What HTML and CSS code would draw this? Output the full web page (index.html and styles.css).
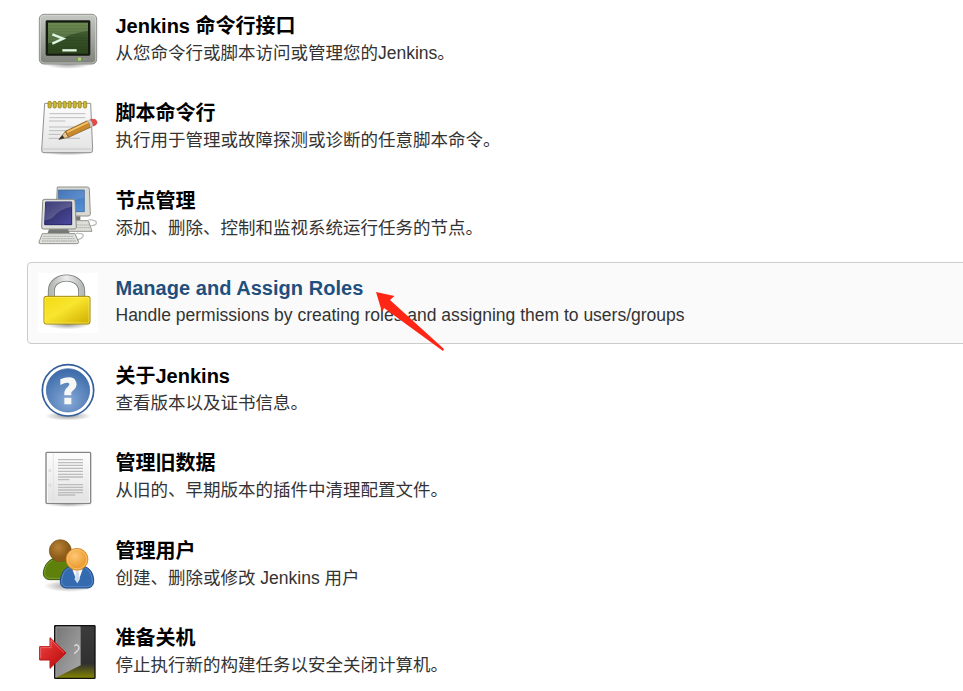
FILE: index.html
```html
<!DOCTYPE html>
<html lang="zh-CN">
<head>
<meta charset="utf-8">
<title>Jenkins</title>
<link rel="stylesheet" href="styles.css">
</head>
<body>
<svg class="defs" width="0" height="0" aria-hidden="true">
  <defs>
    <linearGradient id="metal" x2="0" y2="1"><stop stop-color="#c6c8c3"/><stop offset="1" stop-color="#7f817b"/></linearGradient>
    <linearGradient id="green" x2="0" y2="1"><stop stop-color="#53703c"/><stop offset=".5" stop-color="#36502a"/><stop offset="1" stop-color="#2c451c"/></linearGradient>
    <linearGradient id="paper" x2="0" y2="1"><stop stop-color="#fcfcfc"/><stop offset="1" stop-color="#e3e3e3"/></linearGradient>
    <linearGradient id="blue" x2="1" y2="1"><stop stop-color="#2c62ae"/><stop offset="1" stop-color="#5793d8"/></linearGradient>
    <linearGradient id="navy" x2="1" y2="1"><stop stop-color="#15155f"/><stop offset=".5" stop-color="#383878"/><stop offset="1" stop-color="#4c4aa4"/></linearGradient>
    <linearGradient id="gold" x2="1" y2="1"><stop stop-color="#f2da15"/><stop offset=".45" stop-color="#f8e52d"/><stop offset="1" stop-color="#cfac00"/></linearGradient>
    <linearGradient id="steel"><stop stop-color="#b5b9b5"/><stop offset=".5" stop-color="#ededed"/><stop offset="1" stop-color="#b8bcb8"/></linearGradient>
    <radialGradient id="help" cy=".75" r=".7"><stop stop-color="#86a9d7"/><stop offset="1" stop-color="#3f6dab"/></radialGradient>
    <radialGradient id="brown" cx=".4" cy=".35"><stop stop-color="#b98338"/><stop offset="1" stop-color="#8b5b17"/></radialGradient>
    <radialGradient id="orange" cx=".4" cy=".35"><stop stop-color="#ffc778"/><stop offset="1" stop-color="#eca035"/></radialGradient>
    <linearGradient id="dark" x2="0" y2="1"><stop stop-color="#3c3c3c"/><stop offset=".72" stop-color="#303030"/><stop offset="1" stop-color="#858500"/></linearGradient>
    <linearGradient id="door" x2="1" y2="1"><stop stop-color="#777"/><stop offset="1" stop-color="#aaa"/></linearGradient>
    <linearGradient id="red" x2="1" y2="1"><stop stop-color="#e44"/><stop offset="1" stop-color="#b90505"/></linearGradient>
    <radialGradient id="shade"><stop stop-color="#000" stop-opacity=".4"/><stop offset="1" stop-color="#000" stop-opacity="0"/></radialGradient>
  </defs>
</svg>
<main class="list">
  <a class="item">
    <svg class="icon" viewBox="24 22 180 180">
      <ellipse cx="114" cy="181" rx="72" ry="15" fill="url(#shade)"/>
      <rect x="28" y="32" width="172" height="149" rx="14" fill="url(#metal)" stroke="#8a8c86" stroke-width="3"/>
      <rect x="31" y="35" width="166" height="143" rx="11" fill="none" stroke="#dcddd9" stroke-width="2"/>
      <rect x="47" y="50" width="134" height="106" rx="4" fill="#161b11"/>
      <rect x="54" y="57" width="120" height="93" fill="url(#green)"/>
      <path d="M54 57H174V82Q120 88 84 113L54 119Z" fill="#9dbb7c" opacity=".35"/>
      <path d="M54 66H174M54 75H174M54 84H174M54 93H174M54 102H174M54 111H174M54 120H174M54 129H174M54 138H174" stroke="#193009" opacity=".35"/>
      <path d="M67 92L100 105L67 120" fill="none" stroke="#dff5e3" stroke-width="7"/>
      <path d="M97 140H140" stroke="#e4f7e4" stroke-width="7"/>
      <rect x="144" y="162" width="9" height="9" fill="#a7da65"/><rect x="158" y="162" width="16" height="8" fill="#8b8d87" stroke="#777"/>
    </svg>
    <span class="text"><b class="title">Jenkins 命令行接口</b><span class="desc">从您命令行或脚本访问或管理您的Jenkins。</span></span>
  </a>
  <a class="item">
    <svg class="icon" viewBox="24 24 180 180">
      <ellipse cx="113" cy="187" rx="82" ry="9" fill="url(#shade)"/>
      <path d="M44 40H182L188 180Q188 188 180 188H42Q34 188 35 180Z" fill="url(#paper)" stroke="#929292" stroke-width="3"/>
      <path d="M36 177H187" stroke="#c7c7c7" stroke-width="3"/>
      <path d="M58 71H166M58 83H166M57 93H106M57 111H145M57 122H120M56 133H92M56 145H150" stroke="#a5a5a5" stroke-width="2"/>
      <g fill="#cdb92e" stroke="#857015" stroke-width="2"><rect x="54" y="34" width="10" height="20" rx="4"/><rect x="69" y="34" width="10" height="20" rx="4"/><rect x="84" y="34" width="10" height="20" rx="4"/><rect x="99" y="34" width="10" height="20" rx="4"/><rect x="114" y="34" width="10" height="20" rx="4"/><rect x="129" y="34" width="10" height="20" rx="4"/><rect x="144" y="34" width="10" height="20" rx="4"/><rect x="160" y="34" width="10" height="20" rx="4"/></g>
      <path d="M88 151Q130 133 187 112L180 105Z" fill="#777" opacity=".35"/>
      <path d="M87 148L106 124L116 142Z" fill="#e8c795" stroke="#78552c" stroke-width="2"/><path d="M86 149L97 135L103 144Z" fill="#35312a"/>
      <path d="M106 124L170 93Q183 98 181 112L116 142Z" fill="#c98a2d" stroke="#795016" stroke-width="2"/>
      <path d="M111 127L174 97" stroke="#f2c66c" stroke-width="5"/>
      <path d="M170 93L181 89Q193 93 190 108L181 112Q180 98 170 93Z" fill="#c9cbc7" stroke="#888"/>
      <path d="M181 89Q200 84 201 98Q201 104 190 108Q190 94 181 89Z" fill="#e84a4a" stroke="#c33" stroke-width="2"/>
    </svg>
    <span class="text"><b class="title">脚本命令行</b><span class="desc">执行用于管理或故障探测或诊断的任意脚本命令。</span></span>
  </a>
  <a class="item">
    <svg class="icon" viewBox="24 22 180 180">
      <path d="M176 123Q205 125 198 136Q193 143 176 140M138 164Q164 163 159 173Q155 180 141 184" fill="none" stroke="#c0c0bd" stroke-width="4"/>
      <path d="M82 25H172Q178 25 178 31L181 107Q181 112 174 112H83Q77 112 78 106Z" fill="#d9dad5" stroke="#8e908b" stroke-width="3"/>
      <path d="M85 34H163V99H85Z" fill="url(#blue)" stroke="#31578a" stroke-width="2"/><path d="M85 34H163V57Q125 60 105 83L85 87Z" fill="#fff" opacity=".12"/>
      <path d="M113 113H151V125H113Z" fill="#777974"/><path d="M95 126H175L186 158H93Z" fill="#deded9" stroke="#969792" stroke-width="3"/><path d="M102 139H177M102 147H179" stroke="#b4b5b0" stroke-width="3" stroke-dasharray="5 1"/>
      <path d="M43 62H129Q135 62 135 68L139 146Q139 151 132 151H40Q34 151 35 145L38 68Q38 62 43 62Z" fill="#dedfda" stroke="#888a85" stroke-width="3"/>
      <path d="M47 70H125V138H44Z" fill="url(#navy)" stroke="#22226a" stroke-width="3"/><path d="M47 70H125V84Q89 90 66 119L45 126Z" fill="#fff" opacity=".17"/>
      <path d="M57 152H114L119 163H53Z" fill="#777974"/><path d="M37 165H135L146 191Q146 195 140 195H31Q26 195 27 190Z" fill="#e3e4df" stroke="#8e908b" stroke-width="3"/>
      <path d="M39 173H131M37 180H134M36 187H138" stroke="#b8bab5" stroke-width="4" stroke-dasharray="6 1"/>
    </svg>
    <span class="text"><b class="title">节点管理</b><span class="desc">添加、删除、控制和监视系统运行任务的节点。</span></span>
  </a>
  <a class="item active">
    <svg class="icon locked" viewBox="54 54 180 180">
      <ellipse cx="143" cy="209" rx="66" ry="14" fill="url(#shade)"/>
      <path d="M94 127V108C94 56 185 56 185 108V127" fill="none" stroke="#777b77" stroke-width="21"/>
      <path d="M94 127V108C94 56 185 56 185 108V127" fill="none" stroke="url(#steel)" stroke-width="16"/>
      <rect x="72" y="124" width="138" height="83" rx="6" fill="url(#gold)" stroke="#9b8107" stroke-width="3"/>
      <rect x="75" y="127" width="132" height="77" rx="4" fill="none" stroke="#fff16b" stroke-width="2"/>
    </svg>
    <span class="text"><b class="title">Manage and Assign Roles</b><span class="desc">Handle permissions by creating roles and assigning them to users/groups</span></span>
    <svg class="pointer" viewBox="0 0 68 59"><path d="M0 0L18.5 4L14 8L68 57L67 59L8 16L6 20Z" fill="#ff2616"/></svg>
  </a>
  <a class="item">
    <svg class="icon" viewBox="24 16 180 180">
      <ellipse cx="114" cy="181" rx="69" ry="14" fill="url(#shade)"/>
      <circle cx="114" cy="104" r="77" fill="#fff" stroke="#345f9c" stroke-width="5"/>
      <circle cx="114" cy="104" r="65" fill="url(#help)" stroke="#3b68a5" stroke-width="2"/>
      <path d="M91 71Q116 60 133 69Q148 88 130 104L124 110V119H103V109Q104 101 113 94Q121 86 116 82Q109 79 91 88ZM103 126H124V146H103Z" fill="#f7f7f5"/>
    </svg>
    <span class="text"><b class="title">关于Jenkins</b><span class="desc">查看版本以及证书信息。</span></span>
  </a>
  <a class="item">
    <svg class="icon" viewBox="24 15 180 180">
      <ellipse cx="116" cy="182" rx="75" ry="10" fill="url(#shade)"/>
      <rect x="48" y="28" width="134" height="153" rx="3" fill="#eee" stroke="#858585" stroke-width="4"/>
      <rect x="52" y="32" width="126" height="145" fill="url(#paper)" stroke="#fff" stroke-width="2"/>
      <path d="M70 31V178" stroke="#ddd" stroke-width="2"/><path d="M57 80H62V86H57ZM57 124H62V130H57Z" fill="#fff" stroke="#ccc" stroke-width="2"/>
      <path d="M84 50H159M84 59H159M84 67H159M84 76H159M84 85H159M84 94H159M84 102H159M84 110H118M84 125H159M84 133H159M84 141H159M84 149H159M84 156H136" stroke="#bcbcbc" stroke-width="4"/>
    </svg>
    <span class="text"><b class="title">管理旧数据</b><span class="desc">从旧的、早期版本的插件中清理配置文件。</span></span>
  </a>
  <a class="item">
    <svg class="icon" viewBox="24 16 180 180">
      <ellipse cx="119" cy="166" rx="78" ry="18" fill="url(#shade)"/>
      <path d="M66 85H112Q132 97 136 121Q139 145 122 147H58Q39 145 40 125Q44 97 66 85Z" fill="#5e810c" stroke="#3d5905" stroke-width="3"/>
      <path d="M68 89Q47 99 44 123Q43 142 60 143H100" fill="none" stroke="#89a64a" stroke-width="2"/>
      <circle cx="91" cy="60" r="33" fill="url(#brown)" stroke="#76501b" stroke-width="2"/>
      <path d="M115 109H168Q188 119 191 145Q193 169 174 172H108Q89 170 91 148Q95 119 115 109Z" fill="#346bb0" stroke="#204d88" stroke-width="3"/>
      <path d="M117 112Q98 122 95 148Q94 166 109 168H172Q189 166 187 147Q183 122 166 112" fill="none" stroke="#6997cf" stroke-width="2"/>
      <path d="M127 116L158 116L143 158Z" fill="#fff"/><path d="M139 120H145L149 146L141 157L134 146Z" fill="#cdddeb"/>
      <circle cx="141" cy="86" r="33" fill="url(#orange)" stroke="#cb7c1b" stroke-width="2"/><circle cx="141" cy="86" r="29" fill="none" stroke="#ffcd82" stroke-width="2"/>
    </svg>
    <span class="text"><b class="title">管理用户</b><span class="desc">创建、删除或修改 Jenkins 用户</span></span>
  </a>
  <a class="item">
    <svg class="icon" viewBox="24 21 180 180">
      <rect x="74" y="29" width="121" height="158" rx="2" fill="url(#dark)" stroke="#111" stroke-width="4"/>
      <path d="M77 32H152V148L77 185Z" fill="url(#door)"/><path d="M78 184V33H150" fill="none" stroke="#aaa" stroke-width="2"/>
      <path d="M133 90L139 86Q151 91 145 101L133 113" fill="none" stroke="#dedede" stroke-width="4"/>
      <path d="M29 92H60V65L108 111L60 157V132H29Z" fill="url(#red)" stroke="#bd1414" stroke-width="3"/><path d="M32 127V95H63V72L102 110" fill="none" stroke="#f28181" stroke-width="2"/>
    </svg>
    <span class="text"><b class="title">准备关机</b><span class="desc">停止执行新的构建任务以安全关闭计算机。</span></span>
  </a>
</main>
</body>
</html>
```
FILE: styles.css
```css
* { box-sizing: border-box; }
html { overflow: hidden; }
body {
  margin: 0;
  height: 691px;
  overflow: hidden;
  background: #fff;
  color: #333;
  font-family: "Liberation Sans", "Noto Sans CJK SC", sans-serif;
}
.defs { position: absolute; }
.list {
  display: flex;
  flex-direction: column;
  gap: 5.5px;
  margin: -0.5px -10px 0 27px;
}
.item {
  position: relative;
  display: flex;
  flex: none;
  gap: 17.5px;
  height: 82px;
  padding: 10px;
  border: 1px solid transparent;
  border-radius: 4px;
}
.active { border-color: #ccc; background: #fafafa; }
.icon { flex: none; width: 60px; height: 60px; }
.locked { background: #fff; }
.text {
  display: flex;
  flex-direction: column;
  padding-top: 1px;
  white-space: nowrap;
}
.title {
  height: 28px;
  color: #000;
  font-size: 20px;
  line-height: 28px;
}
.desc {
  height: 26px;
  font-size: 17.5px;
  line-height: 26px;
}
.active .title { color: #1f4f7d; letter-spacing: 0.03px; }
.pointer {
  position: absolute;
  top: 29px;
  left: 348px;
  width: 68px;
  height: 59px;
}
```
